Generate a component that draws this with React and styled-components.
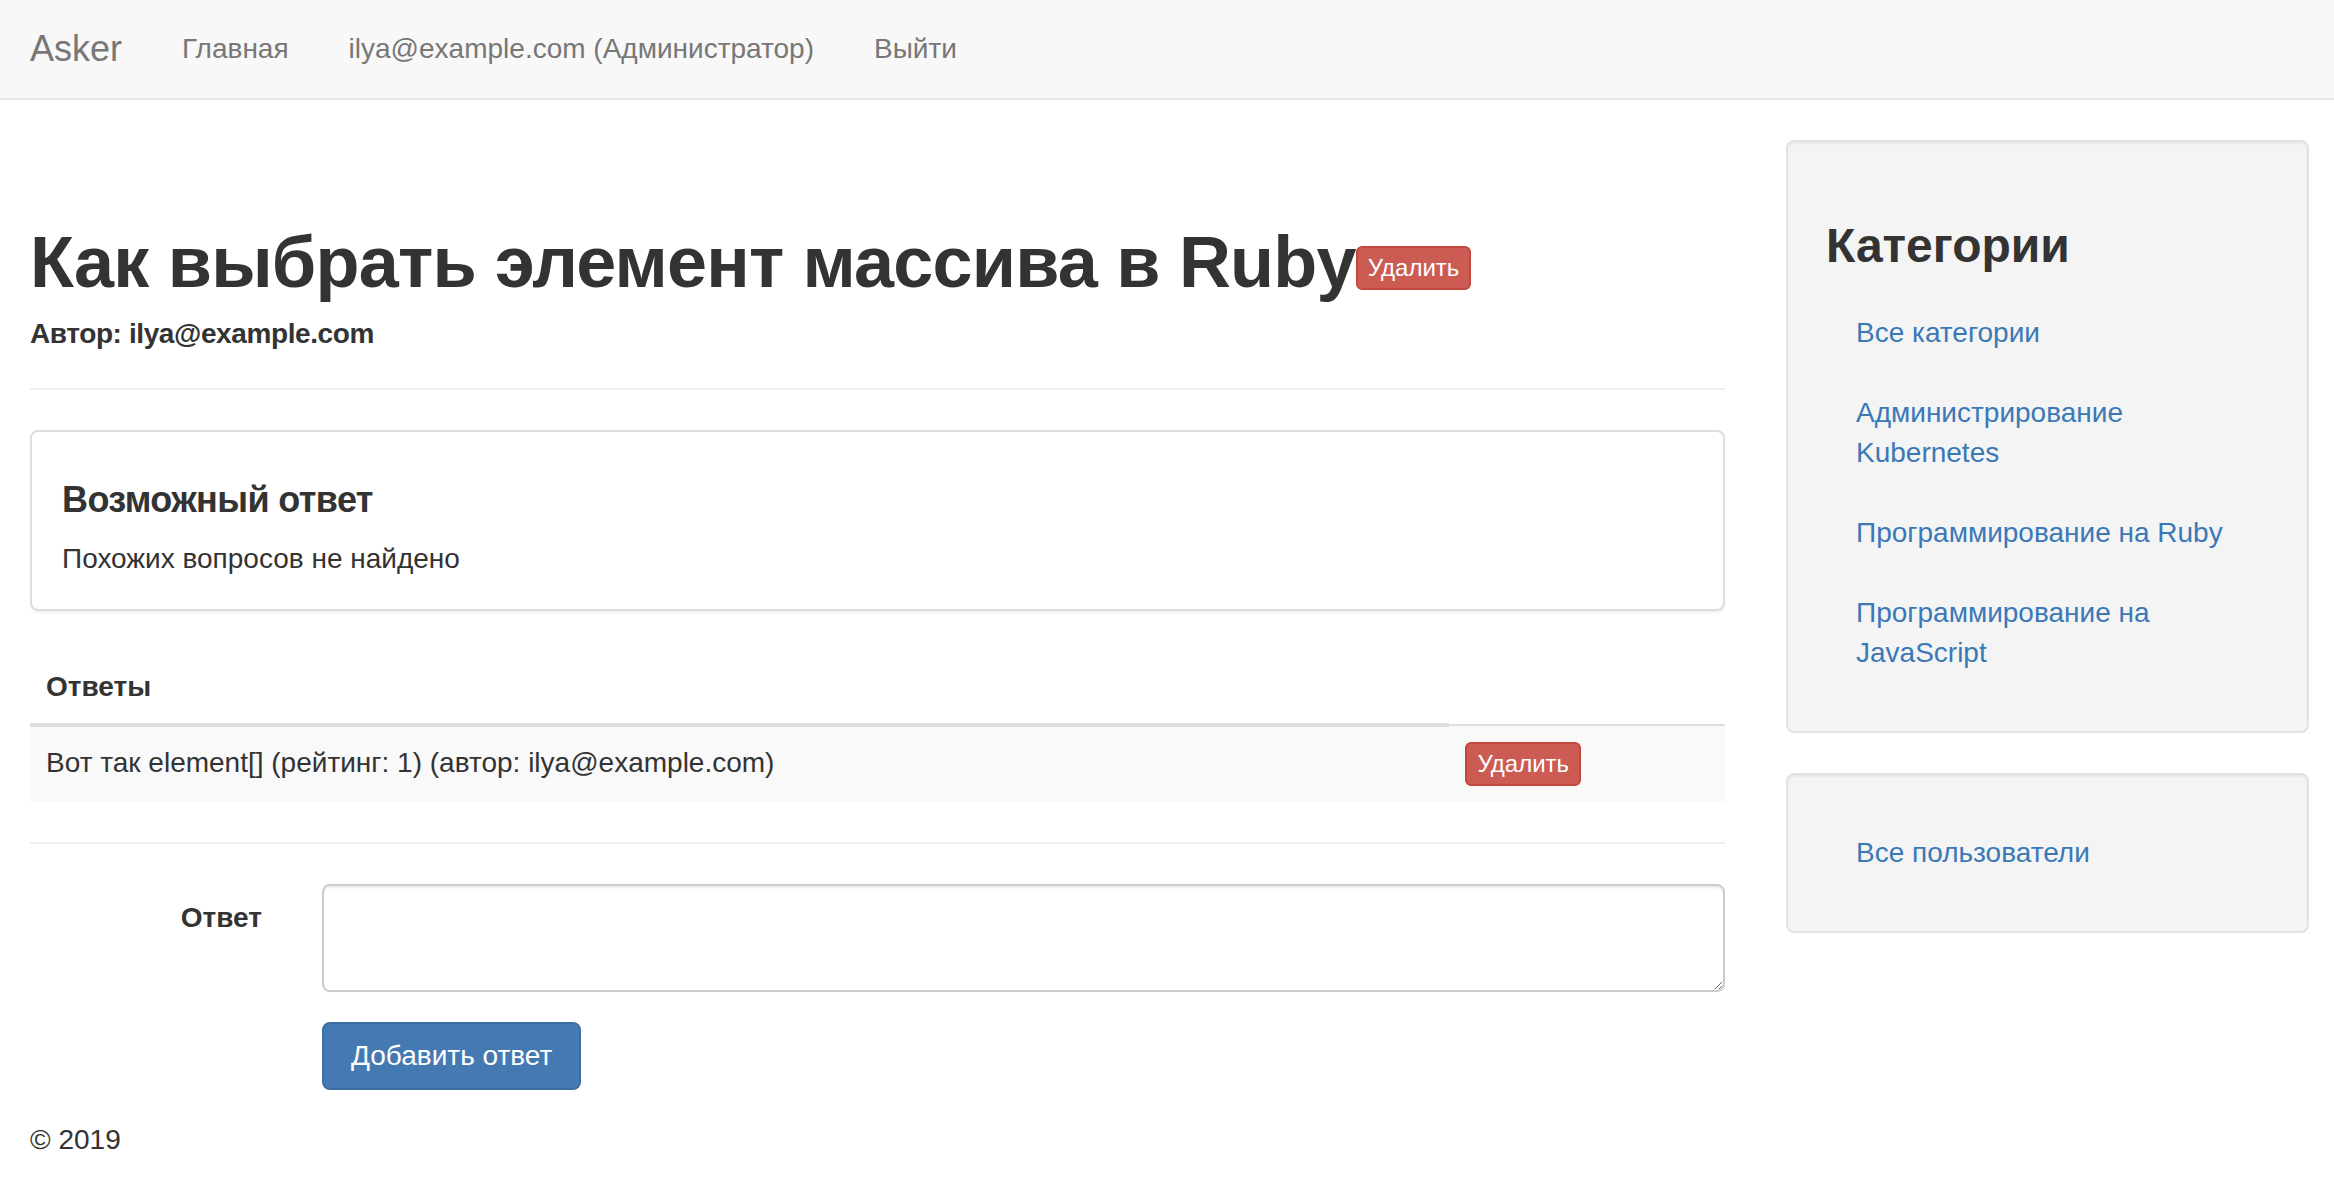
import React from 'react';
import styled, { createGlobalStyle } from 'styled-components';

const GlobalStyle = createGlobalStyle`
  * { box-sizing: border-box; }
  body {
    margin: 0;
    font-family: "Liberation Sans", Arial, sans-serif;
    font-size: 28px;
    line-height: 40px;
    color: #333;
    background: #fff;
  }
`;

const Navbar = styled.nav`
  display: flex;
  align-items: center;
  height: 100px;
  background: #f8f8f8;
  border-bottom: 2px solid #e7e7e7;
  margin-bottom: 40px;
`;

const Brand = styled.a`
  padding: 30px;
  font-size: 36px;
  line-height: 40px;
  color: #777;
  text-decoration: none;
`;

const NavLink = styled.a`
  padding: 30px;
  line-height: 40px;
  color: #777;
  text-decoration: none;
`;

const Layout = styled.div`
  display: grid;
  grid-template-columns: minmax(0, 1fr) 523px;
  column-gap: 61px;
  padding: 0 25px 0 30px;
`;

const Main = styled.main`
  min-width: 0;
`;

const PageHeader = styled.div`
  margin: 80px 0 40px;
  padding-bottom: 18px;
  border-bottom: 2px solid #eee;
`;

const Title = styled.h1`
  margin: 0 0 14px;
  font-size: 72px;
  line-height: 85px;
  font-weight: 700;
  letter-spacing: -0.8px;
`;

const Author = styled.h5`
  margin: 0 0 20px;
  font-size: 28px;
  line-height: 1.1;
  font-weight: 700;
  letter-spacing: -0.4px;
`;

const XsButton = styled.a`
  display: inline-block;
  vertical-align: middle;
  padding: 2px 10px;
  font-size: 24px;
  line-height: 36px;
  font-weight: 400;
  letter-spacing: 0;
  color: #fff;
  background: #cc5b54;
  border: 2px solid #c4473f;
  border-radius: 6px;
  text-decoration: none;
`;

const Panel = styled.section`
  border: 2px solid #ddd;
  border-radius: 8px;
  padding: 30px;
  margin-bottom: 40px;
  box-shadow: 0 2px 2px rgba(0, 0, 0, 0.05);
`;

const PanelTitle = styled.h4`
  margin: 18px 0 19px;
  font-size: 36px;
  line-height: 40px;
  font-weight: 700;
  letter-spacing: -0.6px;
`;

const Table = styled.table`
  width: 100%;
  border-collapse: collapse;
  margin-bottom: 40px;
`;

const Th = styled.th`
  padding: 16px;
  text-align: left;
  line-height: 40px;
  border-bottom: 4px solid #ddd;
`;

const Td = styled.td`
  padding: 16px;
  line-height: 40px;
  vertical-align: top;
  border-top: 2px solid #ddd;
  background: #f9f9f9;
`;

const Rule = styled.hr`
  margin: 40px 0;
  border: 0;
  border-top: 2px solid #eee;
`;

const FormRow = styled.div`
  display: grid;
  grid-template-columns: 232px minmax(0, 1fr);
  column-gap: 60px;
  margin-bottom: 30px;
`;

const Label = styled.label`
  padding-top: 14px;
  text-align: right;
  font-weight: 700;
`;

const TextArea = styled.textarea`
  display: block;
  width: 100%;
  height: 108px;
  padding: 12px 24px;
  font: inherit;
  color: #555;
  border: 2px solid #ccc;
  border-radius: 8px;
  box-shadow: inset 0 2px 2px rgba(0, 0, 0, 0.075);
`;

const PrimaryButton = styled.button`
  grid-column: 2;
  justify-self: start;
  padding: 12px 27px;
  font: inherit;
  color: #fff;
  background: #4579b2;
  border: 2px solid #3d6da2;
  border-radius: 8px;
`;

const Footer = styled.footer`
  padding: 0 30px;
`;

const Well = styled.aside`
  background: #f4f4f4;
  border: 2px solid #e3e3e3;
  border-radius: 8px;
  padding: 38px;
  margin-bottom: 40px;
  box-shadow: inset 0 2px 2px rgba(0, 0, 0, 0.05);
`;

const WellTitle = styled.h3`
  margin: 40px 0 20px;
  font-size: 48px;
  line-height: 1.1;
  font-weight: 700;
`;

const NavList = styled.ul`
  list-style: none;
  margin: 0;
  padding: 0;
`;

const SideLink = styled.a`
  display: block;
  padding: 20px 30px;
  color: #3a78b6;
  text-decoration: none;
`;

const categories = [
  'Все категории',
  'Администрирование Kubernetes',
  'Программирование на Ruby',
  'Программирование на JavaScript',
];

export default function App() {
  return (
    <>
      <GlobalStyle />
      <Navbar>
        <Brand href="#">Asker</Brand>
        <NavLink href="#">Главная</NavLink>
        <NavLink href="#">ilya@example.com (Администратор)</NavLink>
        <NavLink href="#">Выйти</NavLink>
      </Navbar>
      <Layout>
        <Main>
          <PageHeader>
            <Title>
              Как выбрать элемент массива в Ruby<XsButton href="#">Удалить</XsButton>
            </Title>
            <Author>Автор: ilya@example.com</Author>
          </PageHeader>

          <Panel>
            <PanelTitle>Возможный ответ</PanelTitle>
            <div>Похожих вопросов не найдено</div>
          </Panel>

          <Table>
            <thead>
              <tr>
                <Th>Ответы</Th>
              </tr>
            </thead>
            <tbody>
              <tr>
                <Td>Вот так element[] (рейтинг: 1) (автор: ilya@example.com)</Td>
                <Td>
                  <XsButton href="#">Удалить</XsButton>
                </Td>
              </tr>
            </tbody>
          </Table>

          <Rule />

          <form>
            <FormRow>
              <Label htmlFor="answer">Ответ</Label>
              <TextArea id="answer" rows={2} />
            </FormRow>
            <FormRow>
              <PrimaryButton type="button">Добавить ответ</PrimaryButton>
            </FormRow>
          </form>
        </Main>

        <div>
          <Well>
            <WellTitle>Категории</WellTitle>
            <NavList>
              {categories.map((c) => (
                <li key={c}>
                  <SideLink href="#">{c}</SideLink>
                </li>
              ))}
            </NavList>
          </Well>
          <Well>
            <NavList>
              <li>
                <SideLink href="#">Все пользователи</SideLink>
              </li>
            </NavList>
          </Well>
        </div>
      </Layout>
      <Footer>© 2019</Footer>
    </>
  );
}
